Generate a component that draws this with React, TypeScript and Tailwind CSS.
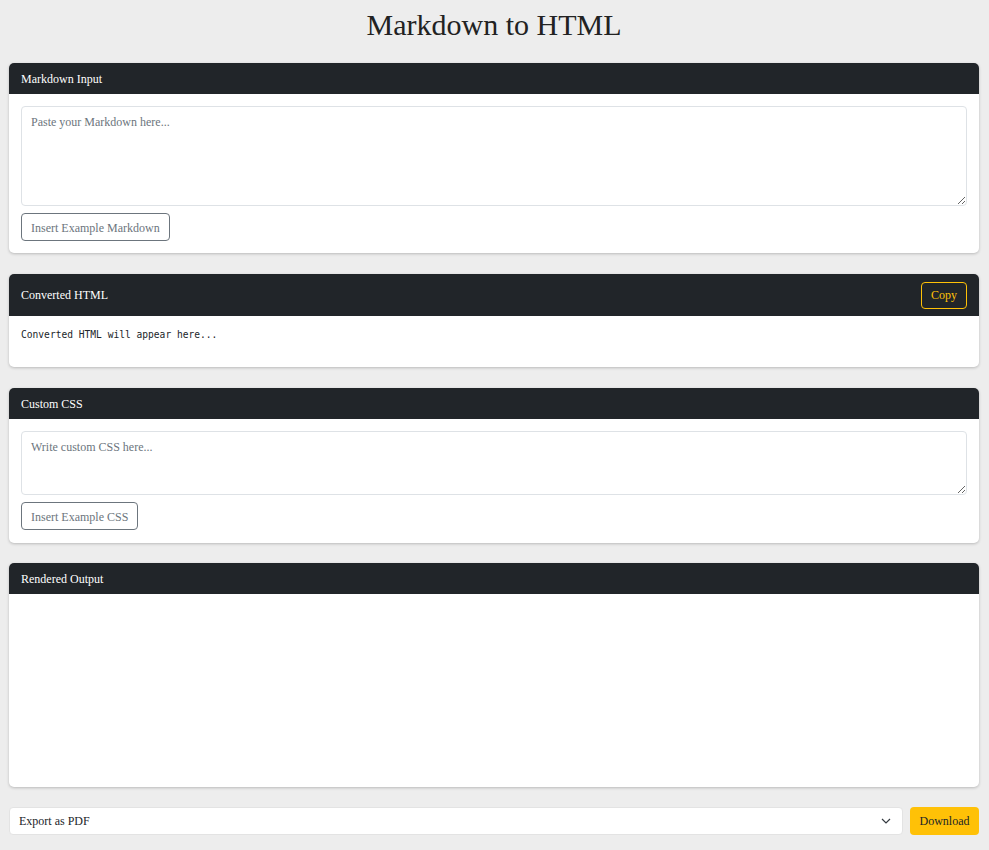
import React, { useState } from "react";

const serif = "font-['Liberation_Serif','Times_New_Roman',serif]";

function CardHeader({ title, children, tall }: { title: string; children?: React.ReactNode; tall?: boolean }) {
  return (
    <div
      className={`flex items-center justify-between rounded-t-[5px] bg-[#212529] px-3 text-white ${
        tall ? "h-[42px]" : "h-[31px]"
      }`}
    >
      <span className="text-[12px]">{title}</span>
      {children}
    </div>
  );
}

function OutlineButton({ label }: { label: string }) {
  return (
    <button className="h-[28px] rounded-[4px] border border-[#6c757d] px-[9px] pt-[2px] text-[12px] text-[#6c757d]">
      {label}
    </button>
  );
}

export default function App() {
  const [markdown, setMarkdown] = useState("");
  const [css, setCss] = useState("");

  return (
    <div className={`min-h-screen bg-[#ededed] pl-[9px] pr-[10px] text-[12px] text-[#212529] ${serif}`}>
      {/* Title */}
      <h1 className="pt-[7px] pb-[20px] text-center text-[30px] leading-[36px] text-[#222]">Markdown to HTML</h1>

      {/* Markdown Input */}
      <div className="mb-[21px] rounded-[5px] bg-white shadow-[0_1px_3px_rgba(0,0,0,0.22)]">
        <CardHeader title="Markdown Input" />
        <div className="p-3">
          <textarea
            value={markdown}
            onChange={(e) => setMarkdown(e.target.value)}
            placeholder="Paste your Markdown here..."
            className="block h-[100px] w-full rounded-[4px] border border-[#dee2e6] px-[9px] py-[6px] text-[12px] leading-[18px] placeholder:text-[#6c757d] focus:outline-none"
          />
          <div className="mt-[7px]">
            <OutlineButton label="Insert Example Markdown" />
          </div>
        </div>
      </div>

      {/* Converted HTML */}
      <div className="mb-[21px] rounded-[5px] bg-white shadow-[0_1px_3px_rgba(0,0,0,0.22)]">
        <CardHeader title="Converted HTML" tall>
          <button className="h-[27px] rounded-[4px] border border-[#ffc107] px-[9px] text-[12px] text-[#ffc107]">
            Copy
          </button>
        </CardHeader>
        <div className="p-3">
          <pre className="h-[27px] font-['DejaVu_Sans_Mono',monospace] text-[9.6px] leading-[14px] text-[#212529]">
            Converted HTML will appear here...
          </pre>
        </div>
      </div>

      {/* Custom CSS */}
      <div className="mb-[20px] rounded-[5px] bg-white shadow-[0_1px_3px_rgba(0,0,0,0.22)]">
        <CardHeader title="Custom CSS" />
        <div className="px-3 pt-3 pb-[13px]">
          <textarea
            value={css}
            onChange={(e) => setCss(e.target.value)}
            placeholder="Write custom CSS here..."
            className="block h-[64px] w-full rounded-[4px] border border-[#dee2e6] px-[9px] py-[6px] text-[12px] leading-[18px] placeholder:text-[#6c757d] focus:outline-none"
          />
          <div className="mt-[7px]">
            <OutlineButton label="Insert Example CSS" />
          </div>
        </div>
      </div>

      {/* Rendered Output */}
      <div className="mb-[20px] rounded-[5px] bg-white shadow-[0_1px_3px_rgba(0,0,0,0.22)]">
        <CardHeader title="Rendered Output" />
        <div className="h-[193px]" />
      </div>

      {/* Export */}
      <div className="flex gap-[7px] pb-[15px]">
        <div className="flex h-[28px] flex-1 items-center justify-between rounded-[4px] border border-[#e3e3e3] bg-white pl-[9px] pr-[11px]">
          <span className="text-[12px] text-[#212529]">Export as PDF</span>
          <svg width="10" height="6" viewBox="0 0 10 6" fill="none" stroke="#343a40" strokeWidth="1.2">
            <path d="M1 1l4 4 4-4" />
          </svg>
        </div>
        <button className="h-[28px] w-[69px] rounded-[4px] bg-[#ffc107] text-[12px] text-[#212529]">Download</button>
      </div>
    </div>
  );
}
